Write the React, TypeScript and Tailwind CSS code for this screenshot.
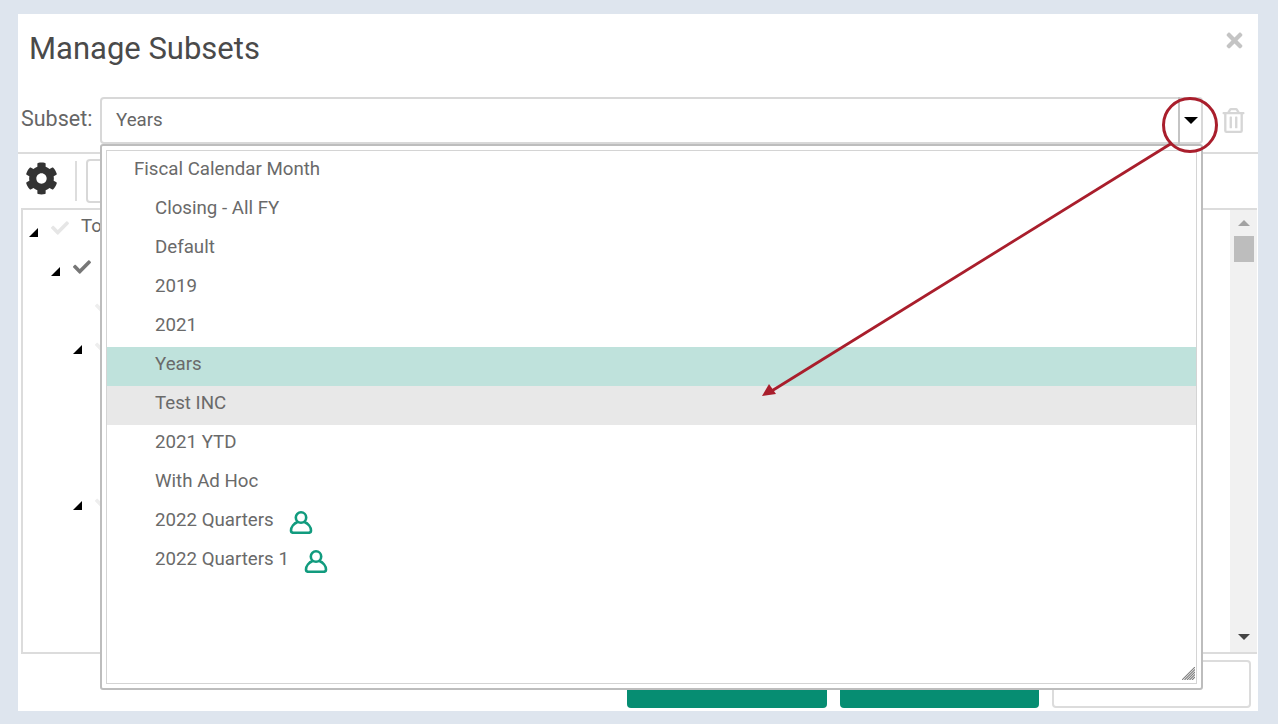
import { FaCheck, FaCog, FaRegTrashAlt, FaTimes } from 'react-icons/fa';

const options = [
  { label: 'Closing - All FY' },
  { label: 'Default' },
  { label: '2019' },
  { label: '2021' },
  { label: 'Years', rowClass: 'bg-[#bfe2dc]' },
  { label: 'Test INC', rowClass: 'bg-[#e8e8e8]' },
  { label: '2021 YTD' },
  { label: 'With Ad Hoc' },
  { label: '2022 Quarters', shared: true },
  { label: '2022 Quarters 1', shared: true },
];

function Caret() {
  return <span className="block w-0 h-0 border-l-[9px] border-l-transparent border-b-[9px] border-b-black" />;
}

function PersonIcon() {
  return (
    <svg width="24" height="24" viewBox="0 0 24 24" fill="none" stroke="#119b7e" strokeWidth="2.6">
      <circle cx="12" cy="7.5" r="5.2" />
      <path d="M8.5 12C5 13.5 2 17 2 20.5C2 22 3 22.8 4.5 22.8H19.5C21 22.8 22 22 22 20.5C22 17 19 13.5 15.5 12" strokeLinecap="round" />
    </svg>
  );
}

function TreeRow({ indent, caret, children }: { indent: string; caret?: boolean; children?: React.ReactNode }) {
  return (
    <div className={`flex items-center h-[39px] pb-[3px] ${indent}`}>
      <span className="w-[22px] pt-[8px]">{caret && <Caret />}</span>
      {children}
    </div>
  );
}

export default function App() {
  return (
    <div className="w-[1278px] h-[724px] bg-[#dee5ee] pt-[14px] px-[18px] overflow-hidden font-[Roboto,sans-serif]">
      <div className="relative w-[1240px] h-[697px] bg-white">
        {/* Header */}
        <div className="flex items-start justify-between h-[83px] pl-[11px] pr-[12px] pt-[15px]">
          <h1 className="text-[31px] leading-[40px] text-[#4a4a4a]">Manage Subsets</h1>
          <FaTimes className="text-[#c4c4c4] text-[23px]" />
        </div>

        {/* Subset picker */}
        <div className="flex items-center h-[47px] pl-[3px]">
          <label className="w-[79px] pb-[3px] text-[21.5px] text-[#666666]">Subset:</label>
          <div className="flex items-center w-[1103px] h-[47px] pl-[14px] border-2 border-[#d8d8d8] rounded-[4px] text-[18.7px] text-[#666666]">
            Years
          </div>
          <FaRegTrashAlt className="ml-[18px] text-[#d6d6d6] text-[25px]" />
        </div>

        <div className="mt-[8px] h-[2px] bg-[#dcdcdc]" />

        {/* Toolbar */}
        <div className="flex items-center h-[54px] pl-[7px]">
          <FaCog className="mb-[5px] text-[#333333] text-[33px]" />
          <span className="ml-[17px] w-[2px] h-[40px] bg-[#dddddd]" />
          <span className="ml-[9px] w-[120px] h-[44px] border-2 border-[#d8d8d8] rounded-[4px]" />
        </div>

        {/* Tree panel and scrollbar */}
        <div className="flex ml-[3px] w-[1236px] h-[446px] border-2 border-r-0 border-[#dcdcdc]">
          <div className="flex-1 pl-[6px] text-[18.7px] text-[#666666]">
            <TreeRow indent="" caret>
              <FaCheck className="text-[#e6e6e6] text-[18px]" />
              <span className="ml-[12px] -mt-[3px]">To</span>
            </TreeRow>
            <TreeRow indent="pl-[22px]" caret>
              <FaCheck className="text-[#777777] text-[18px]" />
            </TreeRow>
            <TreeRow indent="pl-[44px]">
              <FaCheck className="text-[#eeeeee] text-[18px]" />
            </TreeRow>
            <TreeRow indent="pl-[44px]" caret>
              <FaCheck className="text-[#eeeeee] text-[18px]" />
            </TreeRow>
            <TreeRow indent="" />
            <TreeRow indent="" />
            <TreeRow indent="" />
            <TreeRow indent="pl-[44px]" caret>
              <FaCheck className="text-[#eeeeee] text-[18px]" />
            </TreeRow>
          </div>
          <div className="flex flex-col items-center justify-between w-[27px] pt-[10px] pb-[12px] bg-[#f1f1f1]">
            <div className="flex flex-col items-center">
              <span className="w-0 h-0 border-x-[6px] border-x-transparent border-b-[6px] border-b-[#a3a3a3]" />
              <span className="mt-[10px] w-[20px] h-[26px] bg-[#bdbdbd]" />
            </div>
            <span className="w-0 h-0 border-x-[6px] border-x-transparent border-t-[6px] border-t-[#444444]" />
          </div>
        </div>

        {/* Footer buttons */}
        <div className="flex justify-end gap-[13px] mt-[6px] pr-[7px]">
          <button className="w-[200px] h-[48px] rounded-[4px] bg-[#068d72]" />
          <button className="w-[199px] h-[48px] rounded-[4px] bg-[#068d72]" />
          <button className="w-[199px] h-[48px] rounded-[4px] border-2 border-[#dcdcdc] bg-white" />
        </div>

        {/* Open dropdown */}
        <div className="absolute left-[82px] top-[130px] w-[1103px] h-[546px] p-[4px] bg-white border-2 border-[#bdbdbd] rounded-[3px]">
          <div className="relative h-full pt-[1px] border border-[#d4d4d4] text-[18.7px] text-[#6a6a6a]">
            <div className="flex items-center h-[39px] pl-[27px] pb-[5px]">Fiscal Calendar Month</div>
            {options.map(o => (
              <div key={o.label} className={`flex items-center h-[39px] pl-[48px] pb-[5px] ${o.rowClass ?? ''}`}>
                {o.label}
                {o.shared && <span className="ml-[15px] mt-[3px]"><PersonIcon /></span>}
              </div>
            ))}
            <svg className="absolute right-[1px] bottom-[3px]" width="13" height="13" viewBox="0 0 13 13" stroke="#808080" strokeWidth="1.1">
              <path d="M0 13L13 0M2.5 13L13 2.5M5 13L13 5M7.5 13L13 7.5M10 13L13 10" />
            </svg>
          </div>
        </div>

        {/* Dropdown toggle, sits on the picker */}
        <div className="absolute left-[1160px] top-[83px] flex items-center justify-center w-[24px] h-[47px] border-l-2 border-[#c4c4c4]">
          <span className="w-0 h-0 border-x-[7px] border-x-transparent border-t-[7px] border-t-black" />
        </div>

        {/* Callout annotation */}
        <svg className="absolute left-0 top-0 pointer-events-none" width="1240" height="697" fill="none">
          <circle cx="1172" cy="111" r="26.5" stroke="#a91e2c" strokeWidth="3" />
          <path d="M1154 129L752 378" stroke="#a91e2c" strokeWidth="2.8" />
          <path d="M744 382L751 370L758 380Z" fill="#a91e2c" />
        </svg>
      </div>
    </div>
  );
}
